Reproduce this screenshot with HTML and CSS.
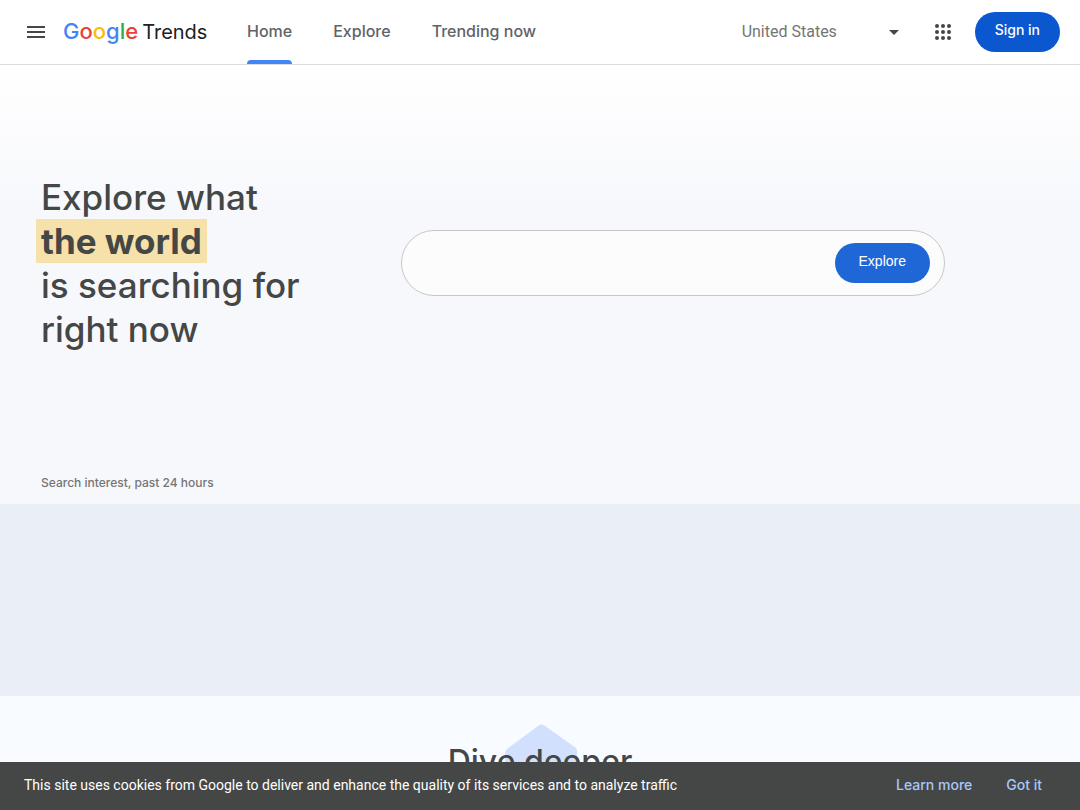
FILE: index.html
```
<!DOCTYPE html>
<html lang="en">

<head>
    <meta charset="UTF-8">
    <meta name="viewport" content="width=device-width, initial-scale=1.0">
    <title>Google Trends</title>
    <link rel="stylesheet" href="styles.css">
</head>

<body>
    <header class="header">
        <button class="icon-btn menu" aria-label="Main menu">
            <svg width="24" height="24" viewBox="0 0 24 24"><path d="M3 18h18v-2H3v2zm0-5h18v-2H3v2zm0-7v2h18V6H3z"/></svg>
        </button>
        <a href="#" class="logo"><span class="blue">G</span><span class="red">o</span><span class="yellow">o</span><span class="blue">g</span><span class="green">l</span><span class="red">e</span><span class="product">Trends</span></a>
        <nav class="nav">
            <a href="#" class="active">Home</a>
            <a href="#">Explore</a>
            <a href="#">Trending now</a>
        </nav>
        <div class="country">
            <select aria-label="Country">
                <option>United States</option>
            </select>
            <svg class="arrow" width="24" height="24" viewBox="0 0 24 24"><path d="M7 10l5 5 5-5z"/></svg>
        </div>
        <button class="icon-btn apps" aria-label="Google apps">
            <svg width="24" height="24" viewBox="0 0 24 24">
                <circle cx="6" cy="6" r="2"/><circle cx="12" cy="6" r="2"/><circle cx="18" cy="6" r="2"/>
                <circle cx="6" cy="12" r="2"/><circle cx="12" cy="12" r="2"/><circle cx="18" cy="12" r="2"/>
                <circle cx="6" cy="18" r="2"/><circle cx="12" cy="18" r="2"/><circle cx="18" cy="18" r="2"/>
            </svg>
        </button>
        <a href="#" class="sign-in">Sign in</a>
    </header>

    <main>
        <section class="hero">
            <div class="hero-row">
                <h1>Explore what<br><mark>the world</mark><br>is searching for<br>right now</h1>
                <form class="search">
                    <input type="text" aria-label="Search term">
                    <button type="button">Explore</button>
                </form>
            </div>
            <p class="caption">Search interest, past 24 hours</p>
        </section>
        <section class="interest"></section>
        <section class="deeper">
            <svg class="shape" width="74" height="80" viewBox="0 0 74 80"><path d="M36 1.300q2.500-1.600 5 0L73 24q1 1 1 3V78H2V30q0-3 2-5z"/></svg>
            <h2>Dive deeper</h2>
        </section>
    </main>

    <div class="cookie-bar">
        <p>This site uses cookies from Google to deliver and enhance the quality of its services and to analyze traffic</p>
        <a href="#">Learn more</a>
        <button>Got it</button>
    </div>
</body>

</html>
```

FILE: styles.css
```
* {
    margin: 0;
    padding: 0;
    box-sizing: border-box;
}

body {
    font-family: Inter, 'Liberation Sans', sans-serif;
    color: #444746;
    background: #f8fbff;
    height: 100vh;
    overflow: hidden;
}

a {
    text-decoration: none;
}

button {
    border: none;
    background: none;
    font-family: inherit;
    cursor: pointer;
}

.header {
    display: flex;
    align-items: center;
    height: 65px;
    padding: 0 20px 1px 24px;
    background: #fff;
    border-bottom: 1px solid #dadce0;
}

.icon-btn {
    width: 24px;
    height: 24px;
    fill: #444746;
}

.menu {
    margin-right: 15px;
}

.logo {
    display: flex;
    align-items: baseline;
    width: 144px;
    font-size: 22px;
    font-weight: 500;
    line-height: 32px;
    white-space: nowrap;
}

.blue {
    color: #4285f4;
}

.red {
    color: #ea4335;
}

.yellow {
    color: #fbbc04;
}

.green {
    color: #34a853;
}

.product {
    margin-left: 4px;
    font-size: 20px;
    font-weight: 400;
    color: #202124;
}

.nav {
    display: flex;
    align-self: stretch;
    gap: 41px;
    margin-left: 40px;
}

.nav a {
    position: relative;
    display: flex;
    align-items: center;
    padding-bottom: 1px;
    font-size: 16px;
    font-weight: 500;
    color: #5f6368;
}

.nav .active::after {
    content: "";
    position: absolute;
    left: 0;
    right: 0;
    bottom: -1px;
    height: 4px;
    border-radius: 4px 4px 0 0;
    background: #4285f4;
}

.country {
    display: flex;
    align-items: center;
    width: 164px;
    margin-left: auto;
}

.country select {
    flex: 1;
    appearance: none;
    border: none;
    outline: none;
    background: transparent;
    font-family: Roboto, sans-serif;
    font-size: 16px;
    color: #757575;
}

.arrow {
    fill: #444746;
    pointer-events: none;
}

.apps {
    margin: 0 20px 0 25px;
}

.sign-in {
    height: 40px;
    padding: 0 20px;
    border-radius: 20px;
    background: #0b57d0;
    color: #fff;
    font-size: 14px;
    font-weight: 500;
    line-height: 36px;
}

.hero {
    padding: 110px 12.5% 13px 41px;
    background: linear-gradient(#fff, #f7f8fc 150px);
}

.hero-row {
    display: flex;
    align-items: center;
}

h1 {
    width: 360px;
    font-size: 35px;
    font-weight: 500;
    line-height: 44px;
    white-space: nowrap;
}

mark {
    display: inline-block;
    margin-left: -5px;
    padding: 0 5px;
    background: #f6e1ab;
    color: inherit;
    font-weight: 700;
    vertical-align: top;
}

.search {
    display: flex;
    align-items: center;
    flex: 1;
    height: 66px;
    padding: 0 14px 0 24px;
    border: 1px solid #c7c7c7;
    border-radius: 33px;
    background: #fcfcfc;
}

.search input {
    flex: 1;
    min-width: 0;
    height: 40px;
    border: none;
    outline: none;
    background: transparent;
    font-size: 16px;
}

.search button {
    height: 40px;
    padding: 0 24px 4px;
    border-radius: 20px;
    background: #1f67d6;
    color: #fff;
    font-family: 'Liberation Sans', sans-serif;
    font-size: 14px;
}

.caption {
    margin-top: 123px;
    font-size: 12px;
    font-weight: 500;
    line-height: 17px;
    color: #757575;
}

.interest {
    height: 192px;
    background: #eaeef7;
}

.deeper {
    position: relative;
    padding-top: 44px;
    text-align: center;
}

.shape {
    position: absolute;
    top: 28px;
    left: 50%;
    margin-left: -37px;
    fill: #d0e0fd;
}

h2 {
    position: relative;
    font-size: 32px;
    font-weight: 500;
    line-height: 44px;
}

.cookie-bar {
    position: fixed;
    left: 0;
    right: 0;
    bottom: 0;
    display: flex;
    align-items: center;
    height: 48px;
    padding: 0 38px 3px 24px;
    background: #444746;
    color: #fff;
    font-size: 14px;
}

.cookie-bar p {
    margin-right: auto;
    font-family: Roboto, sans-serif;
}

.cookie-bar a,
.cookie-bar button {
    color: #a8c7fa;
    font-size: 14px;
    font-weight: 500;
}

.cookie-bar a {
    margin-right: 34px;
}
```
